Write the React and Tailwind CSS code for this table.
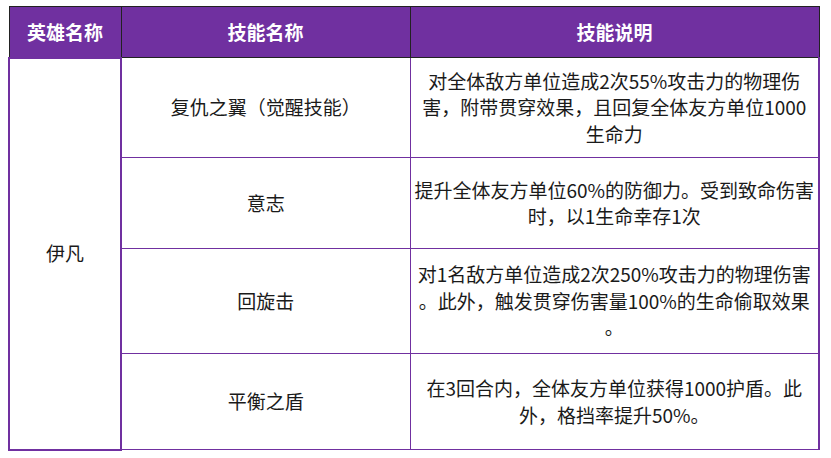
import React from "react";

const skills = [
  {
    name: "复仇之翼（觉醒技能）",
    desc: ["对全体敌方单位造成2次55%攻击力的物理伤", "害，附带贯穿效果，且回复全体友方单位1000", "生命力"],
    h: "h-[100px]",
  },
  {
    name: "意志",
    desc: ["提升全体友方单位60%的防御力。受到致命伤害", "时，以1生命幸存1次"],
    h: "h-[91px]",
  },
  {
    name: "回旋击",
    desc: ["对1名敌方单位造成2次250%攻击力的物理伤害", "。此外，触发贯穿伤害量100%的生命偷取效果", "。"],
    h: "h-[105px]",
  },
  {
    name: "平衡之盾",
    desc: ["在3回合内，全体友方单位获得1000护盾。此", "外，格挡率提升50%。"],
    h: "h-[96px]",
  },
];

export default function App() {
  return (
    <div className="w-[831px] h-[458px] bg-white pt-[6px] pl-[8px] font-['Microsoft_YaHei','Noto_Sans_CJK_SC',sans-serif]">
      <table className="border-collapse table-fixed w-[810px] text-[19px] text-[#1a1a1a]">
        <colgroup>
          <col className="w-[112px]" />
          <col className="w-[289px]" />
          <col className="w-[409px]" />
        </colgroup>
        <thead>
          <tr className="h-[51px] bg-[#7030a0] text-white font-bold">
            <th className="border border-[#222]">英雄名称</th>
            <th className="border border-[#222]">技能名称</th>
            <th className="border border-[#222]">技能说明</th>
          </tr>
        </thead>
        <tbody>
          {skills.map((s, i) => (
            <tr key={s.name} className={s.h}>
              {i === 0 && (
                <td rowSpan={4} className="border-2 border-[#7030a0] text-center">
                  伊凡
                </td>
              )}
              <td className="border border-[#7030a0] text-center">{s.name}</td>
              <td className="border border-[#7030a0] border-r-2 text-center leading-[26.5px] px-0">
                {s.desc.map((l, j) => (
                  <div key={j} className="whitespace-nowrap">{l}</div>
                ))}
              </td>
            </tr>
          ))}
        </tbody>
      </table>
    </div>
  );
}
